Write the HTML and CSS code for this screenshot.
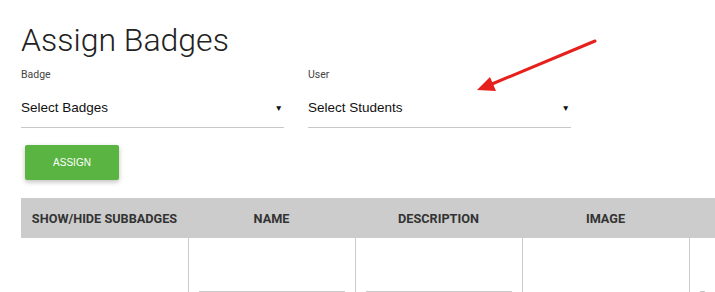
FILE: index.html
```html
<!DOCTYPE html>
<html lang="en">
<head>
  <meta charset="UTF-8">
  <title>Assign Badges</title>
  <link rel="stylesheet" href="styles.css">
</head>
<body>
  <div class="page">
    <h1 class="title">Assign Badges</h1>

    <div class="fields">
      <div class="field">
        <label class="field-label">Badge</label>
        <div class="select">
          <span>Select Badges</span>
          <span class="caret">&#9660;</span>
        </div>
      </div>
      <div class="field">
        <label class="field-label">User</label>
        <div class="select">
          <span>Select Students</span>
          <span class="caret">&#9660;</span>
        </div>
      </div>
    </div>

    <button class="btn-assign">ASSIGN</button>

    <table class="badges">
      <thead>
        <tr>
          <th>SHOW/HIDE SUBBADGES</th>
          <th>NAME</th>
          <th>DESCRIPTION</th>
          <th>IMAGE</th>
          <th></th>
        </tr>
      </thead>
      <tbody>
        <tr>
          <td></td>
          <td><div class="cell-input"></div></td>
          <td><div class="cell-input"></div></td>
          <td></td>
          <td><div class="cell-input"></div></td>
        </tr>
      </tbody>
    </table>
  </div>

  <!-- red annotation arrow pointing at the user select -->
  <svg class="arrow" width="715" height="292" viewBox="0 0 715 292">
    <line x1="595" y1="41" x2="492" y2="84" stroke="#e6201c" stroke-width="3" stroke-linecap="round"/>
    <polygon points="477,90 490,77 496,91" fill="#e6201c"/>
  </svg>
</body>
</html>
```

FILE: styles.css
```css
* {
  box-sizing: border-box;
  margin: 0;
  padding: 0;
}

body {
  background-color: white;
  font-family: Roboto, "Liberation Sans", sans-serif;
  color: #222;
  overflow: hidden;
}

.page {
  padding: 20px 0 0 21px;
}

.title {
  font-size: 32px;
  font-weight: 300;
  line-height: 40px;
  color: #222;
}

.fields {
  display: flex;
  gap: 24px;
  margin-top: 9px;
}

.field {
  width: 263px;
}

.field-label {
  display: block;
  font-size: 10.5px;
  line-height: 12px;
  color: #444;
}

.select {
  display: flex;
  justify-content: space-between;
  align-items: center;
  height: 47px;
  padding-top: 7px;
  border-bottom: 1px solid #c8c8c8;
  font-family: "Liberation Sans", Arial, sans-serif;
  font-size: 13.5px;
  color: #111;
}

.caret {
  font-size: 8.5px;
  padding-right: 1px;
}

.btn-assign {
  display: block;
  margin: 17px 0 0 4px;
  width: 94px;
  height: 35px;
  border: none;
  border-radius: 2px;
  background-color: #59b442;
  color: white;
  font-family: "Liberation Sans", Arial, sans-serif;
  font-size: 10px;
  box-shadow: 0 2px 5px rgba(0, 0, 0, 0.25);
  cursor: pointer;
}

.badges {
  margin-top: 18px;
  border-collapse: collapse;
  table-layout: fixed;
  width: 694px;
}

.badges th {
  width: 167px;
  height: 40px;
  background-color: #cccccc;
  font-size: 12.7px;
  font-weight: bold;
  color: #333;
  text-align: center;
}

.badges th:last-child {
  width: auto;
}

.badges td {
  height: 54px;
  vertical-align: bottom;
  padding: 0 10px 0;
  border-left: 1px solid #cccccc;
}

.badges td:first-child {
  border-left: none;
}

.cell-input {
  border-bottom: 1px solid #c8c8c8;
}

.arrow {
  position: absolute;
  left: 0;
  top: 0;
  pointer-events: none;
}
```
